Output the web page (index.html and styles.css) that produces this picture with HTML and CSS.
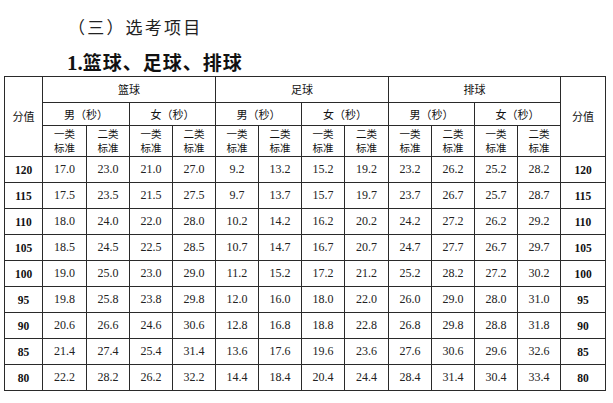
FILE: index.html
```html
<!DOCTYPE html>
<html lang="zh">
<head>
<meta charset="utf-8">
<title>选考项目</title>
<link rel="stylesheet" href="styles.css">
</head>
<body>
<div class="page">
  <h2 class="sec">（三）选考项目</h2>
  <h1 class="sub"><span class="num">1.</span>篮球、足球、排球</h1>
  <table class="grid">
    <colgroup>
      <col style="width:38px"><col style="width:44px"><col style="width:43px"><col style="width:43px"><col style="width:43px"><col style="width:43px"><col style="width:43px"><col style="width:43px"><col style="width:44px"><col style="width:43px"><col style="width:43px"><col style="width:43px"><col style="width:43px"><col style="width:45px">
    </colgroup>
    <thead>
      <tr class="h1">
        <th rowspan="3">分值</th>
        <th colspan="4">篮球</th>
        <th colspan="4">足球</th>
        <th colspan="4">排球</th>
        <th rowspan="3">分值</th>
      </tr>
      <tr class="h2">
        <th colspan="2">男（秒）</th><th colspan="2">女（秒）</th>
        <th colspan="2">男（秒）</th><th colspan="2">女（秒）</th>
        <th colspan="2">男（秒）</th><th colspan="2">女（秒）</th>
      </tr>
      <tr class="h3">
        <th>一类<br>标准</th><th>二类<br>标准</th><th>一类<br>标准</th><th>二类<br>标准</th>
        <th>一类<br>标准</th><th>二类<br>标准</th><th>一类<br>标准</th><th>二类<br>标准</th>
        <th>一类<br>标准</th><th>二类<br>标准</th><th>一类<br>标准</th><th>二类<br>标准</th>
      </tr>
    </thead>
    <tbody>
      <tr><td class="s">120</td><td>17.0</td><td>23.0</td><td>21.0</td><td>27.0</td><td>9.2</td><td>13.2</td><td>15.2</td><td>19.2</td><td>23.2</td><td>26.2</td><td>25.2</td><td>28.2</td><td class="s">120</td></tr>
      <tr><td class="s">115</td><td>17.5</td><td>23.5</td><td>21.5</td><td>27.5</td><td>9.7</td><td>13.7</td><td>15.7</td><td>19.7</td><td>23.7</td><td>26.7</td><td>25.7</td><td>28.7</td><td class="s">115</td></tr>
      <tr><td class="s">110</td><td>18.0</td><td>24.0</td><td>22.0</td><td>28.0</td><td>10.2</td><td>14.2</td><td>16.2</td><td>20.2</td><td>24.2</td><td>27.2</td><td>26.2</td><td>29.2</td><td class="s">110</td></tr>
      <tr><td class="s">105</td><td>18.5</td><td>24.5</td><td>22.5</td><td>28.5</td><td>10.7</td><td>14.7</td><td>16.7</td><td>20.7</td><td>24.7</td><td>27.7</td><td>26.7</td><td>29.7</td><td class="s">105</td></tr>
      <tr><td class="s">100</td><td>19.0</td><td>25.0</td><td>23.0</td><td>29.0</td><td>11.2</td><td>15.2</td><td>17.2</td><td>21.2</td><td>25.2</td><td>28.2</td><td>27.2</td><td>30.2</td><td class="s">100</td></tr>
      <tr><td class="s">95</td><td>19.8</td><td>25.8</td><td>23.8</td><td>29.8</td><td>12.0</td><td>16.0</td><td>18.0</td><td>22.0</td><td>26.0</td><td>29.0</td><td>28.0</td><td>31.0</td><td class="s">95</td></tr>
      <tr><td class="s">90</td><td>20.6</td><td>26.6</td><td>24.6</td><td>30.6</td><td>12.8</td><td>16.8</td><td>18.8</td><td>22.8</td><td>26.8</td><td>29.8</td><td>28.8</td><td>31.8</td><td class="s">90</td></tr>
      <tr><td class="s">85</td><td>21.4</td><td>27.4</td><td>25.4</td><td>31.4</td><td>13.6</td><td>17.6</td><td>19.6</td><td>23.6</td><td>27.6</td><td>30.6</td><td>29.6</td><td>32.6</td><td class="s">85</td></tr>
      <tr><td class="s">80</td><td>22.2</td><td>28.2</td><td>26.2</td><td>32.2</td><td>14.4</td><td>18.4</td><td>20.4</td><td>24.4</td><td>28.4</td><td>31.4</td><td>30.4</td><td>33.4</td><td class="s">80</td></tr>
    </tbody>
  </table>
</div>
</body>
</html>
```

FILE: styles.css
```css
html, body {
  margin: 0;
  padding: 0;
  background: #fff;
}
.page {
  padding: 0 0 0 4px;
  font-family: "Liberation Serif", "Noto Sans CJK SC", serif;
  color: #111;
}
.sec {
  margin: 0;
  padding: 15px 0 0 64px;
  height: 26px;
  font-family: "Noto Sans CJK SC", sans-serif;
  font-weight: 400;
  font-size: 17px;
  line-height: 24px;
  letter-spacing: 2.2px;
  color: #222;
}
.sub {
  margin: 0;
  padding: 8px 0 0 63px;
  height: 27px;
  font-family: "Noto Sans CJK SC", sans-serif;
  font-weight: 700;
  font-size: 19px;
  line-height: 26px;
  letter-spacing: 1px;
  color: #111;
}
.sub .num {
  font-family: "Liberation Serif", serif;
  font-size: 21px;
  letter-spacing: 0;
}
.grid {
  border-collapse: collapse;
  table-layout: fixed;
  width: 601px;
}
.grid th, .grid td {
  border: 1px solid #2a2a2a;
  padding: 0;
  text-align: center;
  vertical-align: middle;
}
.grid th {
  font-family: "Noto Sans CJK SC", sans-serif;
  font-weight: 400;
  font-size: 11px;
  line-height: 15px;
  color: #111;
}
.h1 { height: 26px; }
.h2 { height: 23px; }
.h3 { height: 31px; }
.h3 th { font-size: 10.5px; line-height: 14.5px; }
.grid td {
  height: 25px;
  font-size: 12px;
  color: #222;
}
.grid td.s {
  font-weight: 700;
  color: #111;
  font-size: 11.5px;
}
```
